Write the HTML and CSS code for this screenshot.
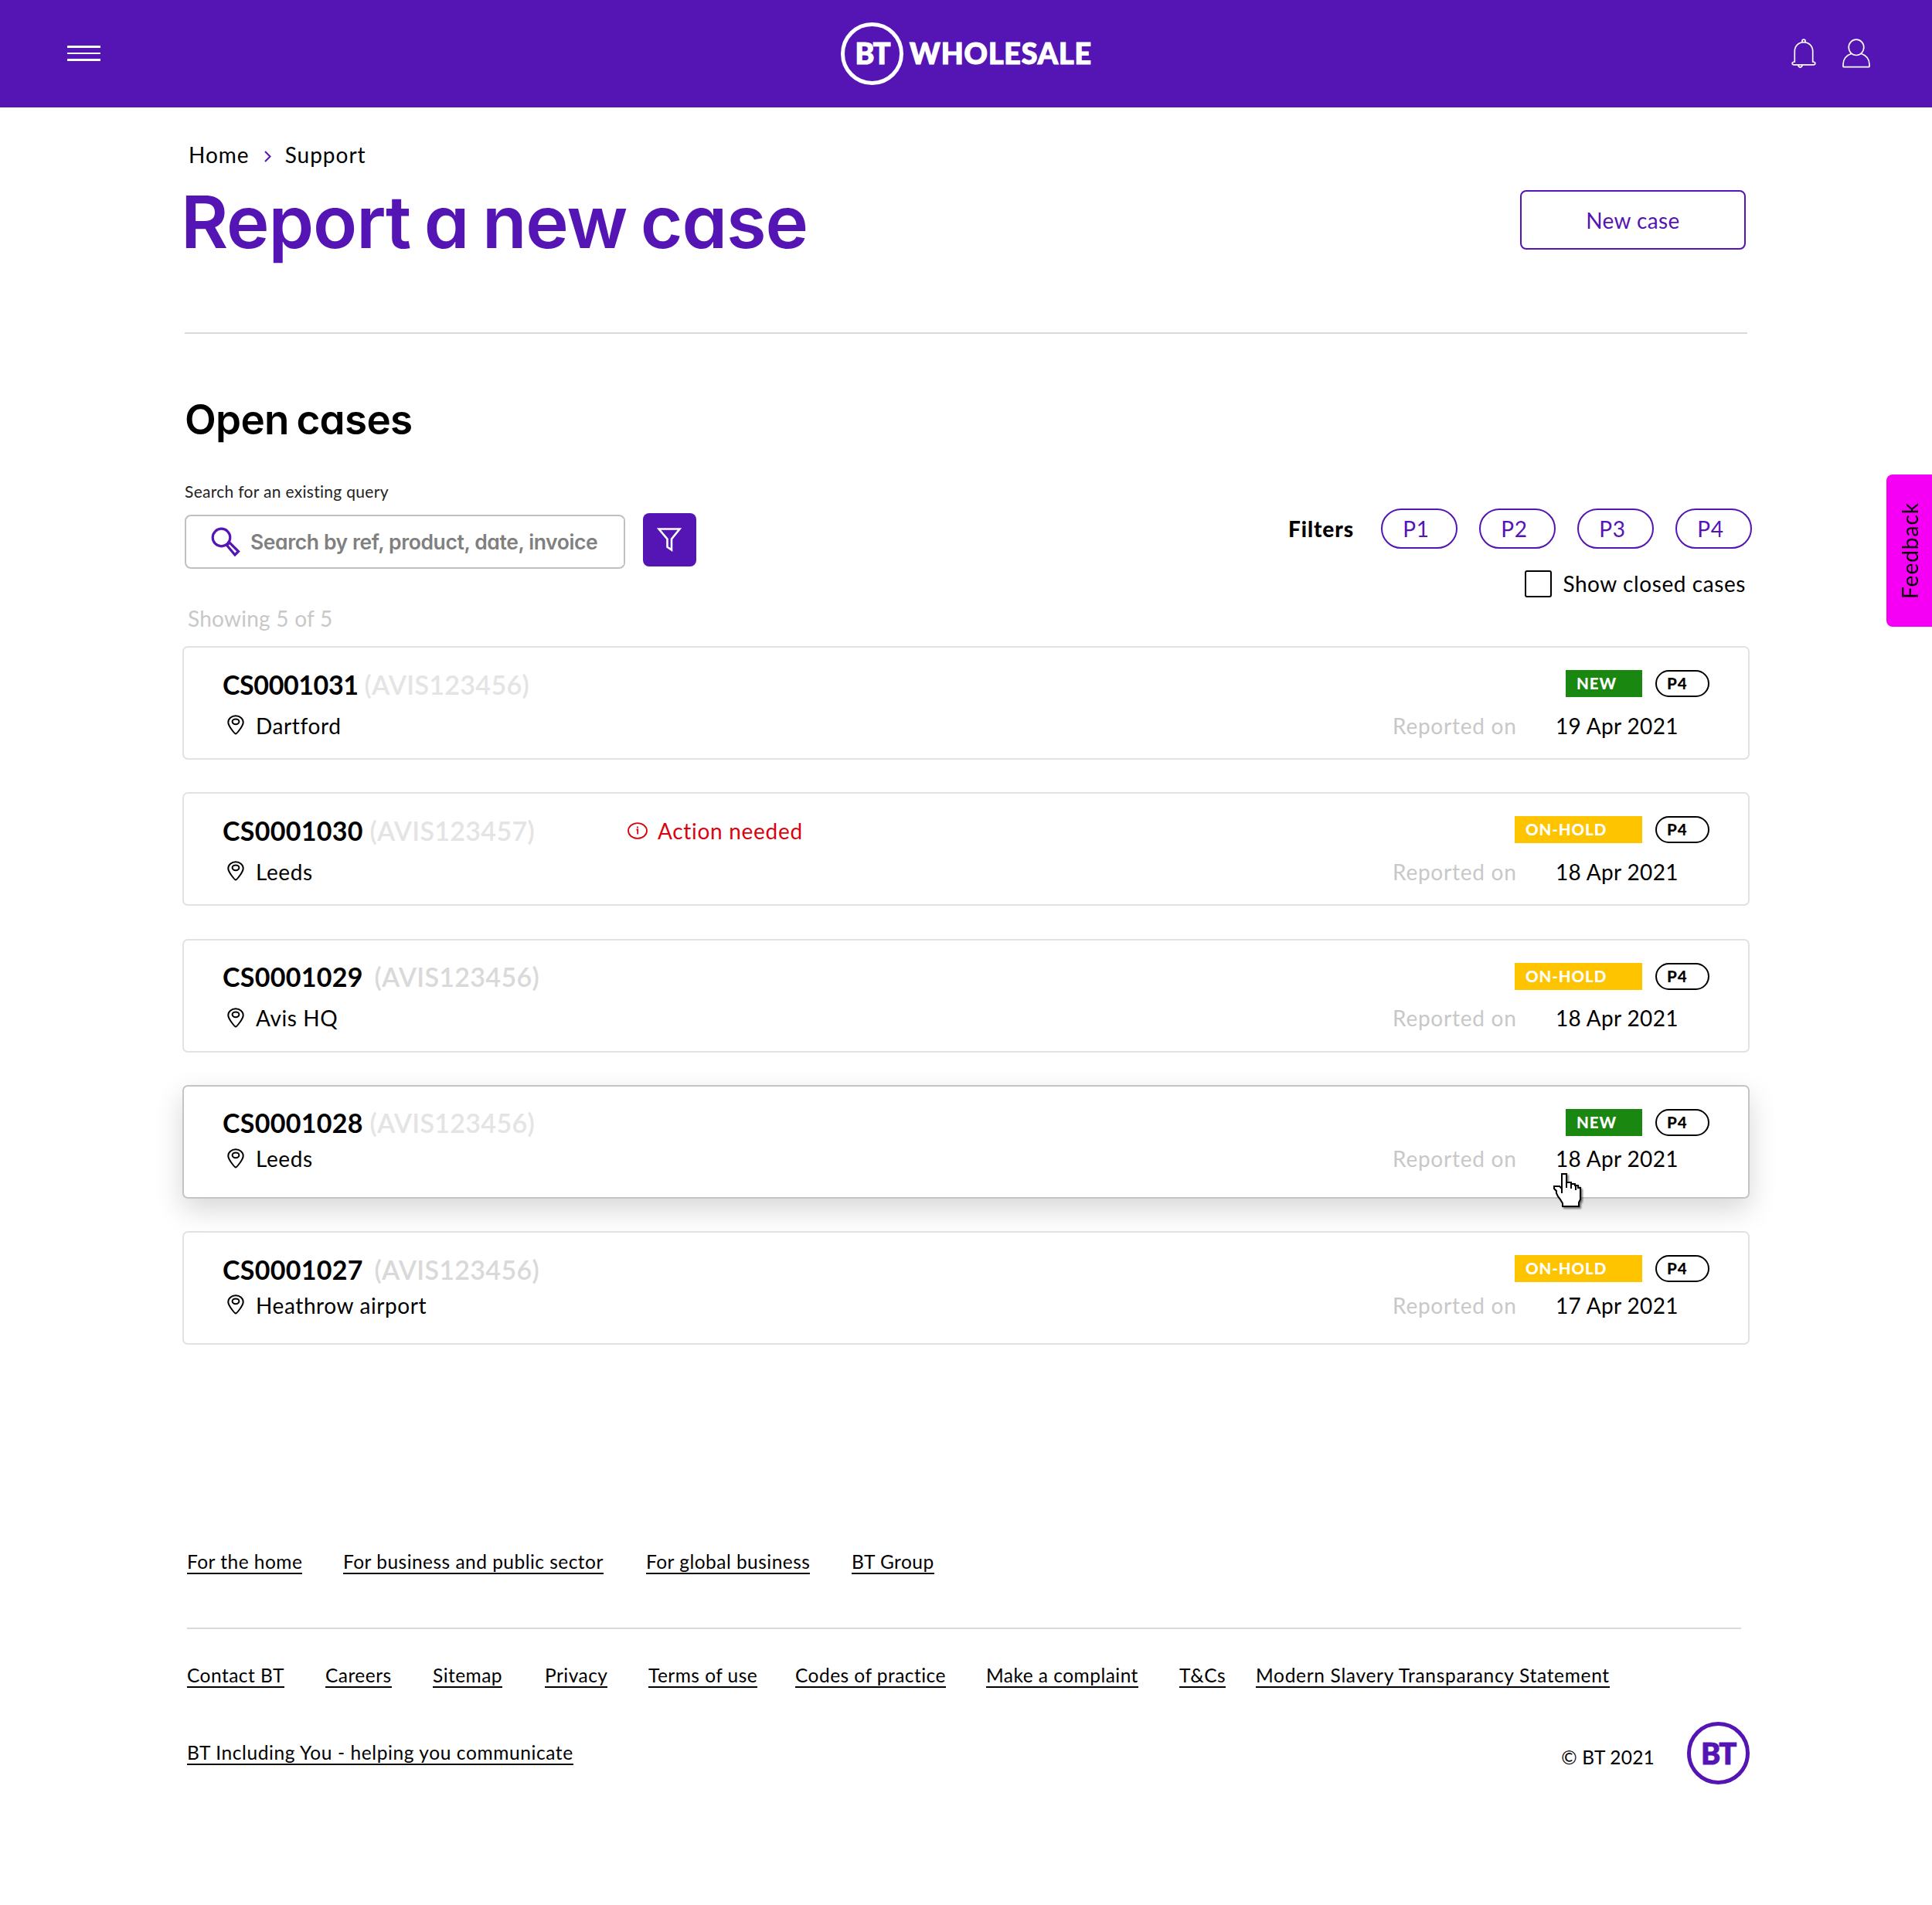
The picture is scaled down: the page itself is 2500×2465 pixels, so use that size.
FILE: index.html
```
<!DOCTYPE html>
<html lang="en">
<head>
    <meta charset="UTF-8">
    <meta name="viewport" content="width=device-width, initial-scale=1.0">
    <title>Report a new case | BT Wholesale</title>
    <link rel="stylesheet" href="styles.css">
</head>
<body>
    <!-- Shared icons -->
    <svg class="sprite">
        <symbol id="icon-pin" viewBox="0 0 22 26">
            <path d="M11 24.6C10 24.6 1.3 14.6 1.3 9.8 1.3 5 5.6 1.3 11 1.3S20.7 5 20.7 9.8C20.7 14.6 12 24.6 11 24.6Z"/>
            <ellipse cx="11" cy="8.8" rx="4.4" ry="3.4"/>
        </symbol>
    </svg>

    <header class="header">
        <button class="menu-button" aria-label="Menu">
            <span></span>
            <span></span>
            <span></span>
        </button>
        <a class="logo" href="#">
            <span class="roundel">BT</span>
            <span class="logo-text">WHOLESALE</span>
        </a>
        <div class="header-actions">
            <button aria-label="Notifications">
                <svg width="32" height="38" viewBox="0 0 32 38">
                    <path d="M14 4.6V3.2a2 2 0 0 1 4 0v1.4"/>
                    <path d="M4.3 30V16.3C4.3 9.4 9.5 4.6 16 4.6s11.7 4.8 11.7 11.7V30c1.8 0 3.1.7 3.1 2s-1.1 1.8-2.4 1.8H3.6c-1.3 0-2.4-.5-2.4-1.8s1.3-2 3.1-2Z"/>
                    <path d="M9 33.8c0 4.3 5 4.3 5 0"/>
                </svg>
            </button>
            <button aria-label="Account">
                <svg width="36" height="38" viewBox="0 0 36 38">
                    <ellipse cx="18" cy="11.3" rx="9.8" ry="10.2"/>
                    <path d="M12 19.3C5.5 21.5 1 26.5 1 33.5v2.2q0 1 1 1h32q1 0 1-1v-2.2c0-7-4.500-12-11-14.2"/>
                </svg>
            </button>
        </div>
    </header>

    <main class="container">
        <nav class="breadcrumb">
            <a href="#">Home</a>
            <svg width="9" height="15" viewBox="0 0 9 15"><path d="M1 1l6.5 6.5L1 14"/></svg>
            <a href="#">Support</a>
        </nav>

        <div class="title-row">
            <h1>Report a new case</h1>
            <button class="new-case">New case</button>
        </div>

        <hr class="divider">

        <h2>Open cases</h2>

        <div class="toolbar">
            <div class="search">
                <label for="search">Search for an existing query</label>
                <div class="search-row">
                    <div class="search-box">
                        <svg width="38" height="38" viewBox="0 0 38 38">
                            <circle cx="13.5" cy="13.5" r="11.3"/>
                            <path d="M20.5 23.5l3.5-3.5 11.5 11.5-4.5 4.500z"/>
                        </svg>
                        <input type="text" id="search" placeholder="Search by ref, product, date, invoice">
                    </div>
                    <button class="filter-button" aria-label="Filter">
                        <svg width="32" height="32" viewBox="0 0 32 32">
                            <path d="M2.5 2.5h27L19 15.5v14l-5.5-3.8V15.500z"/>
                        </svg>
                    </button>
                </div>
            </div>

            <div class="filters">
                <div class="filter-row">
                    <span class="filter-title">Filters</span>
                    <button class="pill">P1</button>
                    <button class="pill">P2</button>
                    <button class="pill">P3</button>
                    <button class="pill">P4</button>
                </div>
                <label class="closed-toggle">
                    <input type="checkbox">
                    Show closed cases
                </label>
            </div>
        </div>

        <p class="result-count">Showing 5 of 5</p>

        <section class="cases">
            <article class="case">
                <div class="case-row">
                    <div class="case-id tight">CS0001031 <span>(AVIS123456)</span></div>
                    <div class="tags">
                        <span class="status new">NEW</span>
                        <span class="priority">P4</span>
                    </div>
                </div>
                <div class="case-row case-info">
                    <svg class="pin"><use href="#icon-pin"/></svg>
                    <span>Dartford</span>
                    <span class="reported">Reported on</span>
                    <span class="date">19 Apr 2021</span>
                </div>
            </article>

            <article class="case">
                <div class="case-row">
                    <div class="case-id">CS0001030 <span>(AVIS123457)</span></div>
                    <div class="action-needed">
                        <svg width="26" height="22" viewBox="0 0 26 22">
                            <ellipse cx="13" cy="11" rx="12" ry="9.8"/>
                            <path d="M11.5 9.500h1.700v6M13 5.500v2"/>
                        </svg>
                        Action needed
                    </div>
                    <div class="tags">
                        <span class="status on-hold">ON-HOLD</span>
                        <span class="priority">P4</span>
                    </div>
                </div>
                <div class="case-row case-info">
                    <svg class="pin"><use href="#icon-pin"/></svg>
                    <span>Leeds</span>
                    <span class="reported">Reported on</span>
                    <span class="date">18 Apr 2021</span>
                </div>
            </article>

            <article class="case">
                <div class="case-row">
                    <div class="case-id spaced">CS0001029 <span>(AVIS123456)</span></div>
                    <div class="tags">
                        <span class="status on-hold">ON-HOLD</span>
                        <span class="priority">P4</span>
                    </div>
                </div>
                <div class="case-row case-info">
                    <svg class="pin"><use href="#icon-pin"/></svg>
                    <span>Avis HQ</span>
                    <span class="reported">Reported on</span>
                    <span class="date">18 Apr 2021</span>
                </div>
            </article>

            <article class="case compact active">
                <div class="case-row">
                    <div class="case-id">CS0001028 <span>(AVIS123456)</span></div>
                    <div class="tags">
                        <span class="status new">NEW</span>
                        <span class="priority">P4</span>
                    </div>
                </div>
                <div class="case-row case-info">
                    <svg class="pin"><use href="#icon-pin"/></svg>
                    <span>Leeds</span>
                    <span class="reported">Reported on</span>
                    <span class="date">18 Apr 2021</span>
                </div>
                <!-- Hand pointer over the hovered card -->
                <svg class="pointer" width="38" height="48" viewBox="0 0 38 48">
                    <path d="M11 3H17V14H23V16H28V18H32V21H35V36L33 40V45H12V41L9 36L6 32L4 28V25L1 22V19H8L11 22Z"/>
                    <path class="fingers" d="M11 20V28M17 14V21M23 16V22M29 18V24"/>
                </svg>
            </article>

            <article class="case compact">
                <div class="case-row">
                    <div class="case-id spaced">CS0001027 <span>(AVIS123456)</span></div>
                    <div class="tags">
                        <span class="status on-hold">ON-HOLD</span>
                        <span class="priority">P4</span>
                    </div>
                </div>
                <div class="case-row case-info">
                    <svg class="pin"><use href="#icon-pin"/></svg>
                    <span>Heathrow airport</span>
                    <span class="reported">Reported on</span>
                    <span class="date">17 Apr 2021</span>
                </div>
            </article>
        </section>
    </main>

    <button class="feedback">Feedback</button>

    <footer class="footer">
        <nav class="site-links">
            <a href="#">For the home</a>
            <a href="#">For business and public sector</a>
            <a href="#">For global business</a>
            <a href="#">BT Group</a>
        </nav>
        <hr class="footer-divider">
        <nav class="legal-links">
            <a href="#">Contact BT</a>
            <a href="#">Careers</a>
            <a href="#">Sitemap</a>
            <a href="#">Privacy</a>
            <a href="#">Terms of use</a>
            <a href="#">Codes of practice</a>
            <a href="#">Make a complaint</a>
            <a href="#">T&amp;Cs</a>
            <a class="slavery-link" href="#">Modern Slavery Transparancy Statement</a>
        </nav>
        <div class="footer-bottom">
            <a href="#">BT Including You - helping you communicate</a>
            <span class="copyright">© BT 2021</span>
            <span class="roundel purple">BT</span>
        </div>
    </footer>
</body>
</html>
```
FILE: styles.css
```
* {
    box-sizing: border-box;
}

body {
    margin: 0;
    font-family: Lato, sans-serif;
    font-size: 28px;
    line-height: 32px;
    letter-spacing: 0.6px;
    color: #000;
    background-color: #fff;
}

a {
    color: inherit;
    text-decoration: none;
}

button {
    padding: 0;
    font: inherit;
    letter-spacing: inherit;
    background: none;
    border: none;
    cursor: pointer;
}

svg {
    display: block;
    flex: none;
    fill: none;
}

hr {
    height: 2px;
    border: none;
    background-color: #d9d9d9;
}

.sprite {
    display: none;
}

/* Header */
.header {
    display: grid;
    grid-template-columns: 1fr auto 1fr;
    align-items: center;
    height: 138.5px;
    padding: 0 80px 0 87px;
    background-color: #5514b4;
}

.menu-button {
    display: flex;
    flex-direction: column;
    gap: 6px;
    width: 43px;
    margin-bottom: 1px;
}

.menu-button span {
    height: 2.5px;
    background-color: #fff;
}

.logo {
    display: flex;
    align-items: center;
    gap: 8px;
    margin-left: -6px;
    color: #fff;
}

.roundel {
    display: flex;
    align-items: center;
    justify-content: center;
    width: 81px;
    height: 81px;
    border: 5px solid #fff;
    border-radius: 50%;
    font-size: 37.5px;
    font-weight: 900;
    letter-spacing: -1.5px;
    -webkit-text-stroke: 1.2px currentColor;
}

.roundel.purple {
    color: #5514b4;
    border-color: #5514b4;
}

.logo-text {
    font-size: 37.5px;
    font-weight: 900;
    letter-spacing: 0.9px;
    -webkit-text-stroke: 1.2px currentColor;
}

.header-actions {
    display: flex;
    justify-content: flex-end;
    gap: 34px;
}

.header-actions svg {
    stroke: #fff;
    stroke-width: 1.7;
}

/* Title */
.container {
    margin: 0 236px;
    padding-top: 45.5px;
}

.breadcrumb {
    display: flex;
    align-items: center;
    margin-left: 8px;
    letter-spacing: 1px;
}

.breadcrumb svg {
    margin: 4px 18px 0 19px;
    stroke: #5514b4;
    stroke-width: 2;
}

.title-row {
    display: flex;
    align-items: flex-start;
    justify-content: space-between;
    margin-top: 18px;
    padding-right: 5px;
}

h1, h2 {
    margin: 0;
    font-family: Inter, sans-serif;
    font-weight: 600;
    font-feature-settings: "cv11";
}

h1 {
    margin: 3px 0 0 -2px;
    font-size: 94px;
    line-height: 100px;
    letter-spacing: -1.1px;
    word-spacing: -5px;
    color: #5514b4;
}

.new-case {
    width: 292px;
    height: 77px;
    margin-top: 12px;
    border: 2px solid #5514b4;
    border-radius: 8px;
    color: #5514b4;
    letter-spacing: 0.4px;
}

.divider {
    margin: 93px 3px 0;
}

h2 {
    margin: 79px 0 0 3px;
    font-size: 53px;
    line-height: 64px;
    letter-spacing: -0.7px;
    word-spacing: -3px;
}

/* Search and filters */
.toolbar {
    display: flex;
    justify-content: space-between;
    margin: 49px -3px 0 3px;
}

.search label {
    display: block;
    font-size: 21px;
    line-height: 24px;
    letter-spacing: 0.3px;
    color: #222;
}

.search-row {
    display: flex;
    align-items: flex-start;
    gap: 23px;
    margin-top: 15.5px;
}

.search-box {
    display: flex;
    align-items: center;
    gap: 13px;
    width: 570px;
    height: 70px;
    margin-top: 2px;
    padding-left: 32px;
    border: 2px solid #c0c0c0;
    border-radius: 8px;
}

.search-box svg {
    stroke: #5514b4;
    stroke-width: 3.2;
}

.search-box input {
    flex: 1;
    min-width: 0;
    height: 60px;
    padding: 0;
    border: none;
    outline: none;
    font-family: Inter, sans-serif;
    font-size: 26.5px;
    font-weight: 600;
    font-feature-settings: "cv11";
    letter-spacing: -0.4px;
}

.search-box input::placeholder {
    color: #808080;
}

.filter-button {
    display: flex;
    align-items: center;
    justify-content: center;
    width: 69px;
    height: 69px;
    padding-right: 2px;
    border-radius: 8px;
    background-color: #5514b4;
}

.filter-button svg {
    stroke: #fff;
    stroke-width: 2.6;
}

.filters {
    display: flex;
    flex-direction: column;
    align-items: flex-end;
    padding-top: 34px;
}

.filter-row {
    display: flex;
    align-items: center;
    gap: 28px;
}

.filter-title {
    margin-right: 7px;
    font-weight: 900;
    letter-spacing: 0.9px;
}

.pill {
    width: 99px;
    height: 52px;
    padding-right: 8px;
    border: 2px solid #5514b4;
    border-radius: 26px;
    color: #5514b4;
}

.closed-toggle {
    display: flex;
    align-items: center;
    gap: 14px;
    margin: 27px 8px 0 0;
    line-height: 36px;
    letter-spacing: 0.58px;
}

.closed-toggle input {
    appearance: none;
    width: 35px;
    height: 35px;
    margin: 0;
    border: 2px solid #000;
    border-radius: 3px;
}

.result-count {
    margin: 11px 0 0 7px;
    letter-spacing: 0.25px;
    color: #c8c8c8;
}

/* Case list */
.cases {
    display: flex;
    flex-direction: column;
    gap: 42.3px;
    margin-top: 20px;
}

.case {
    position: relative;
    height: 147px;
    padding: 27.5px 50px 0;
    border: 2px solid #e2e2e2;
    border-radius: 7px;
}

.case.active {
    border-color: #c4c4c4;
    box-shadow: 0 14px 36px rgba(0, 0, 0, 0.16);
}

.case-row {
    display: flex;
    align-items: center;
}

.case-id {
    width: 524px;
    font-size: 34px;
    font-weight: 700;
    line-height: 40px;
    letter-spacing: 0.3px;
    white-space: nowrap;
}

.case-id.tight {
    letter-spacing: -0.4px;
}

.case-id span {
    font-weight: 600;
    letter-spacing: 0.3px;
    color: #e4e4e4;
}

.case-id.spaced span {
    margin-left: 6px;
    color: #d9d9d9;
}

.action-needed {
    display: flex;
    align-items: center;
    gap: 13px;
    color: #da020f;
    letter-spacing: 0.7px;
}

.action-needed svg {
    stroke: #da020f;
    stroke-width: 1.8;
}

.tags {
    display: flex;
    gap: 17px;
    margin: -2px 0 0 auto;
    font-size: 20.5px;
    font-weight: 900;
    letter-spacing: 0.9px;
}

.status {
    width: 99px;
    height: 35px;
    padding-left: 14px;
    color: #fff;
    line-height: 35px;
}

.status.new {
    background-color: #1a8710;
}

.status.on-hold {
    width: 165px;
    background-color: #ffc400;
}

.priority {
    width: 70px;
    height: 35px;
    padding-left: 13px;
    border: 2px solid #000;
    border-radius: 18px;
    line-height: 31px;
}

.case-info {
    margin-top: 17px;
    padding-left: 6px;
}

.compact .case-info {
    margin-top: 10px;
}

.pin {
    width: 22px;
    height: 26px;
    margin: -1px 15px 0 0;
    stroke: #000;
    stroke-width: 2;
}

.reported {
    width: 211px;
    margin-left: auto;
    color: #c8c8c8;
    letter-spacing: 0.75px;
}

.date {
    width: 199px;
    letter-spacing: 0.35px;
}

.pointer {
    position: absolute;
    top: 110px;
    left: 1772px;
    filter: drop-shadow(2px 2px 1px rgba(0, 0, 0, 0.5));
}

.pointer path {
    fill: #fff;
    stroke: #000;
    stroke-width: 2;
}

.pointer .fingers {
    fill: none;
}

/* Feedback tab */
.feedback {
    position: absolute;
    top: 614px;
    right: 0;
    width: 59px;
    height: 197px;
    border-radius: 0 8px 8px 0;
    background-color: #f500f5;
    writing-mode: vertical-rl;
    transform: rotate(180deg);
    letter-spacing: 1px;
}

/* Footer */
.footer {
    margin: 267px 236px 0 242px;
    font-size: 24.5px;
    line-height: 28px;
    letter-spacing: 0.47px;
}

.footer a {
    border-bottom: 2px solid #000;
}

.site-links, .legal-links {
    display: grid;
    justify-items: start;
}

.site-links {
    grid-template-columns: 202px 392px 266px auto;
}

.legal-links {
    grid-template-columns: 179px 139px 145px 134px 190px 247px 250px 99px auto;
}

.slavery-link {
    letter-spacing: 0.69px;
}

.footer-divider {
    width: 2011px;
    margin: 69px 0 46px;
}

.footer-bottom {
    display: flex;
    align-items: center;
    margin-top: 44px;
}

.footer-bottom a {
    letter-spacing: 0.6px;
}

.copyright {
    margin: 11px 42px 0 auto;
    letter-spacing: 0.2px;
}
```
